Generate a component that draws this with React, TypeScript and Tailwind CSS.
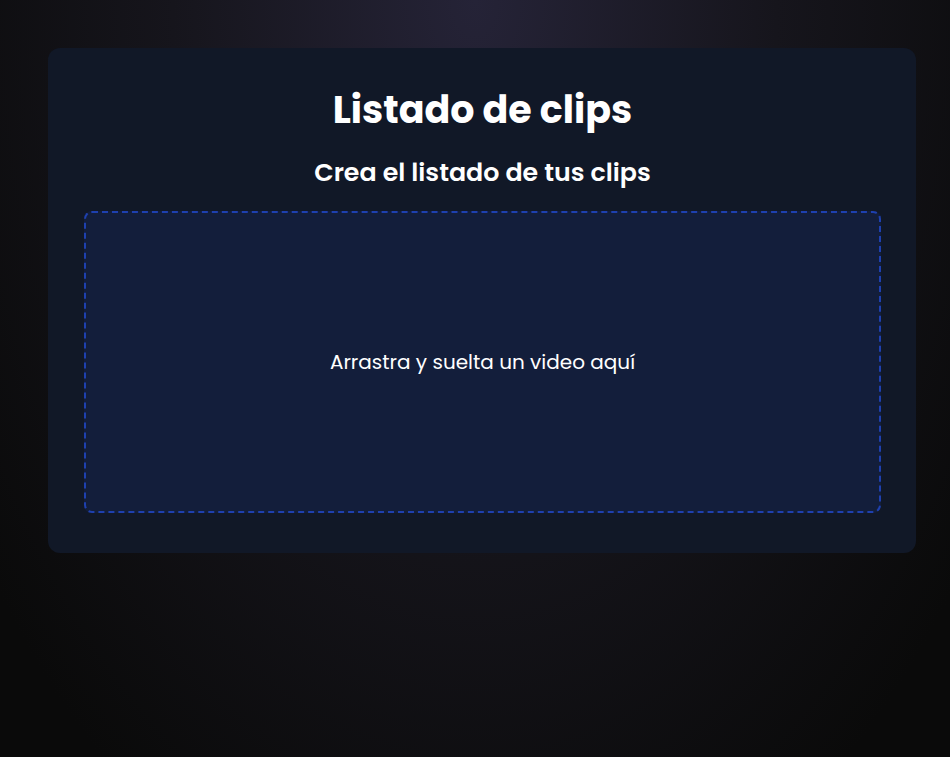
export default function App() {
  return (
    <div
      className="min-h-screen w-full bg-[radial-gradient(ellipse_at_top,_#252337_0%,_#16151c_45%,_#0a0a0a_90%)] pt-12 text-white"
      style={{ fontFamily: 'Poppins, Inter, "Noto Sans", sans-serif' }}
    >
      {/* Card */}
      <div className="ml-12 w-[868px] rounded-xl bg-[#111827] pb-10 pl-9 pr-[35px] pt-10">
        <h1 className="text-center text-[38px] font-bold leading-[44px]">Listado de clips</h1>
        <h2 className="mt-6 text-center text-[25.3px] font-semibold leading-8">Crea el listado de tus clips</h2>

        {/* Drop zone */}
        <div className="mt-[23px] flex h-[302px] items-center justify-center rounded-lg border-2 border-dashed border-[#1e40af] bg-[#131e3b]">
          <p className="text-xl">Arrastra y suelta un video aquí</p>
        </div>
      </div>
    </div>
  );
}
